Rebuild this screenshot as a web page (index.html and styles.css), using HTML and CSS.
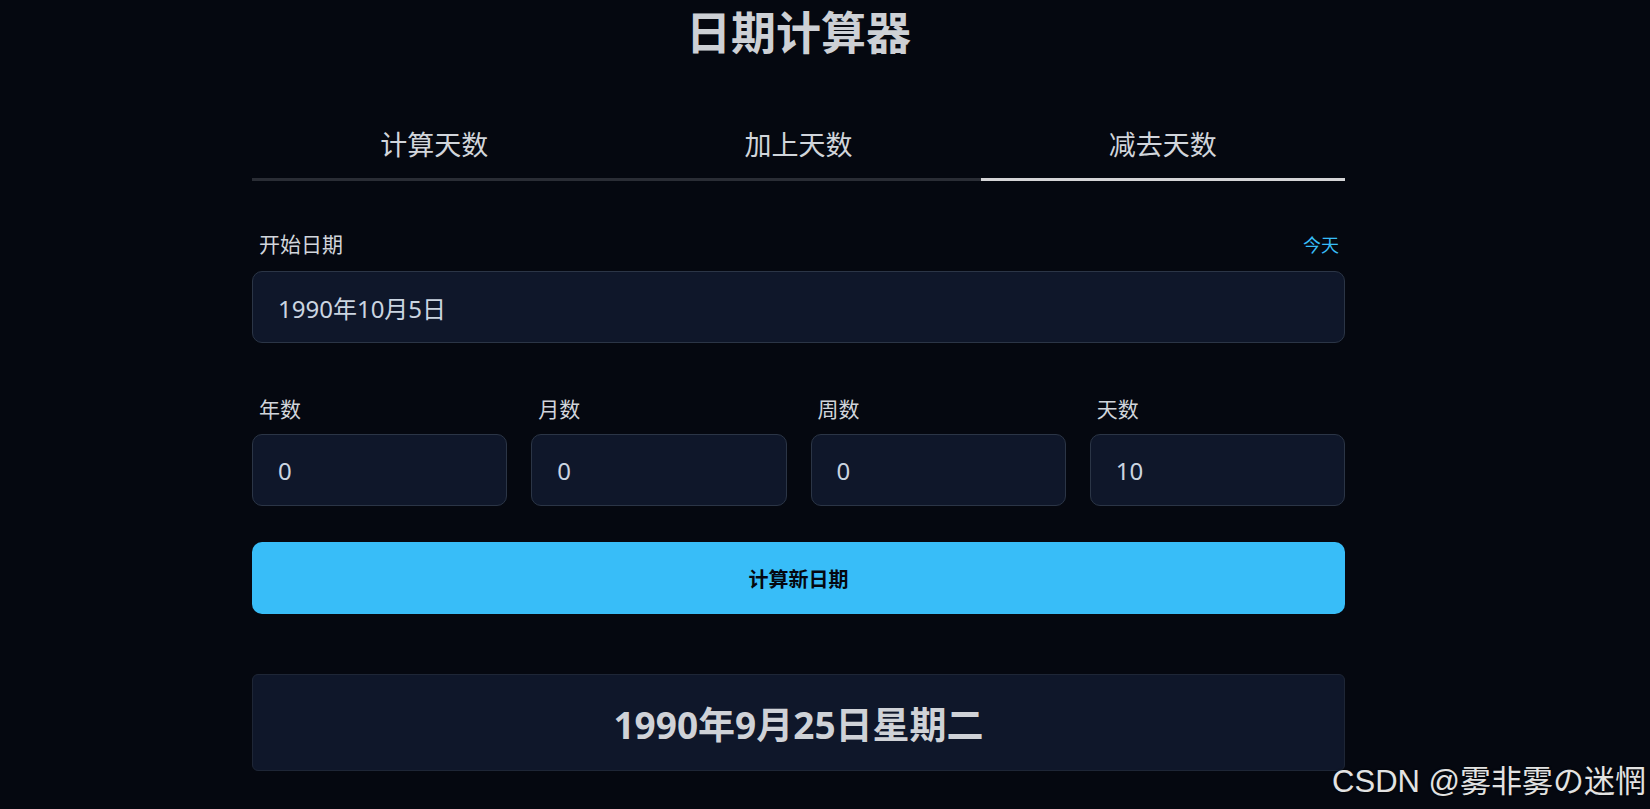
FILE: index.html
```html
<!DOCTYPE html>
<html lang="zh-CN">
<head>
<meta charset="utf-8">
<title>日期计算器</title>
<link rel="stylesheet" href="styles.css">
</head>
<body>
<div class="app">
  <h1 class="title">日期计算器</h1>
  <div class="tabs">
    <div class="tab">计算天数</div>
    <div class="tab">加上天数</div>
    <div class="tab active">减去天数</div>
  </div>
  <div class="field">
    <div class="label-row">
      <span class="label">开始日期</span>
      <span class="today">今天</span>
    </div>
    <div class="input">1990年10月5日</div>
  </div>
  <div class="grid">
    <div class="cell">
      <div class="label small">年数</div>
      <div class="input">0</div>
    </div>
    <div class="cell">
      <div class="label small">月数</div>
      <div class="input">0</div>
    </div>
    <div class="cell">
      <div class="label small">周数</div>
      <div class="input">0</div>
    </div>
    <div class="cell">
      <div class="label small">天数</div>
      <div class="input">10</div>
    </div>
  </div>
  <button class="btn">计算新日期</button>
  <div class="result">1990年9月25日星期二</div>
</div>
<div class="watermark">CSDN @雾非雾の迷惘</div>
</body>
</html>
```
FILE: styles.css
```css
html, body {
  margin: 0;
  padding: 0;
  background: #050810;
  height: 100%;
  overflow: hidden;
}
body {
  font-family: "Noto Sans", "Noto Sans CJK SC", sans-serif;
  color: #d1d5db;
}
.app {
  width: 1093px;
  margin: 0 0 0 252px;
}
.title {
  margin: 5px 0 0;
  font-size: 45px;
  line-height: 56px;
  font-weight: 700;
  text-align: center;
  color: #cdd0d5;
}
.tabs {
  display: flex;
  margin-top: 64px;
}
.tab {
  flex: 1;
  text-align: center;
  font-size: 27px;
  line-height: 40px;
  padding-bottom: 13px;
  border-bottom: 3px solid #2a2d35;
  color: #d1d5db;
}
.tab.active {
  border-bottom-color: #d4d4d6;
}
.field {
  margin-top: 49px;
}
.label-row {
  display: flex;
  justify-content: space-between;
  align-items: center;
  height: 28px;
  margin-bottom: 13px;
}
.label {
  font-size: 21px;
  line-height: 28px;
  padding-left: 7px;
  color: #d1d5db;
}
.today {
  font-size: 18px;
  color: #38bdf8;
  padding-right: 6px;
}
.input {
  box-sizing: border-box;
  height: 72px;
  background: #0f172a;
  border: 1px solid #2b3546;
  border-radius: 10px;
  padding: 0 25px;
  display: flex;
  align-items: center;
  font-size: 24px;
  color: #cbd5e1;
}
.grid {
  display: grid;
  grid-template-columns: repeat(4, 1fr);
  gap: 24px;
  margin-top: 52px;
}
.label.small {
  margin-bottom: 11px;
}
.btn {
  display: block;
  width: 100%;
  height: 72px;
  margin-top: 36px;
  border: none;
  border-radius: 10px;
  background: #38bdf8;
  color: #050810;
  font-family: "Noto Sans", "Noto Sans CJK SC", sans-serif;
  font-size: 20px;
  font-weight: 700;
}
.result {
  margin-top: 60px;
  box-sizing: border-box;
  height: 97px;
  background: #0f172a;
  border: 1px solid #1e2636;
  border-radius: 6px;
  display: flex;
  align-items: center;
  justify-content: center;
  font-size: 37px;
  font-weight: 700;
  color: #cfd2d7;
}
.watermark {
  position: absolute;
  right: 4px;
  bottom: 8px;
  font-family: "Liberation Sans", "Noto Sans CJK SC", sans-serif;
  font-size: 31px;
  color: #e2e2e2;
  text-shadow: 0 0 2px #000;
}
```
